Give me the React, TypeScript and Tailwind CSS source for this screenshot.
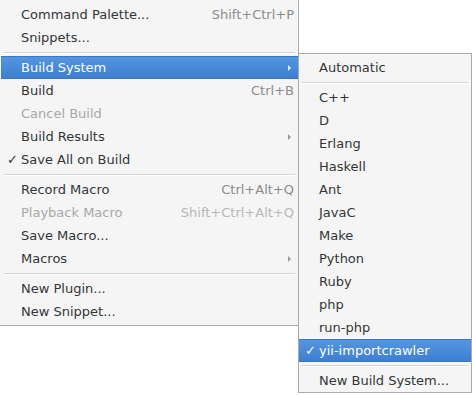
import React from 'react'

type Item =
  | { sep: true }
  | {
      sep?: false
      label: string
      shortcut?: string
      disabled?: boolean
      checked?: boolean
      active?: boolean
      submenu?: boolean
    }

const mainItems: Item[] = [
  { label: 'Command Palette...', shortcut: 'Shift+Ctrl+P' },
  { label: 'Snippets...' },
  { sep: true },
  { label: 'Build System', submenu: true, active: true },
  { label: 'Build', shortcut: 'Ctrl+B' },
  { label: 'Cancel Build', disabled: true },
  { label: 'Build Results', submenu: true },
  { label: 'Save All on Build', checked: true },
  { sep: true },
  { label: 'Record Macro', shortcut: 'Ctrl+Alt+Q' },
  { label: 'Playback Macro', shortcut: 'Shift+Ctrl+Alt+Q', disabled: true },
  { label: 'Save Macro...' },
  { label: 'Macros', submenu: true },
  { sep: true },
  { label: 'New Plugin...' },
  { label: 'New Snippet...' },
]

const buildItems: Item[] = [
  { label: 'Automatic' },
  { sep: true },
  { label: 'C++' },
  { label: 'D' },
  { label: 'Erlang' },
  { label: 'Haskell' },
  { label: 'Ant' },
  { label: 'JavaC' },
  { label: 'Make' },
  { label: 'Python' },
  { label: 'Ruby' },
  { label: 'php' },
  { label: 'run-php' },
  { label: 'yii-importcrawler', checked: true, active: true },
  { sep: true },
  { label: 'New Build System...' },
]

function Arrow({ light }: { light?: boolean }) {
  return (
    <svg width="3" height="6" viewBox="0 0 3 6" className="mr-[3px]">
      <path d="M0 0 L3 3 L0 6 Z" fill={light ? '#e8f0fb' : '#9a9a9a'} />
    </svg>
  )
}

function MenuRows({ items }: { items: Item[] }) {
  return (
    <>
      {items.map((it, i) => {
        if (it.sep) {
          return (
            <div key={i} className="h-[7px] flex flex-col justify-center px-[3px]">
              <div className="h-px bg-[#d4d4d4]" />
              <div className="h-px bg-white" />
            </div>
          )
        }
        const textColor = it.active
          ? 'text-white'
          : it.disabled
            ? 'text-[#a8a8a8]'
            : 'text-[#333638]'
        const scColor = it.active
          ? 'text-white'
          : it.disabled
            ? 'text-[#b8b8b8]'
            : 'text-[#8c8c8c]'
        return (
          <div
            key={i}
            className={`h-[23px] flex items-center pr-[4px] ${
              it.active
                ? 'bg-gradient-to-b from-[#5595e0] to-[#3c7fd3] border-y border-[#3a78c6]'
                : ''
            }`}
          >
            <span className={`w-[20px] pl-[6px] text-[13px] ${textColor}`}>
              {it.checked ? '✓' : ''}
            </span>
            <span className={`flex-1 ${textColor}`}>{it.label}</span>
            {it.shortcut && <span className={scColor}>{it.shortcut}</span>}
            {it.submenu && <Arrow light={it.active} />}
          </div>
        )
      })}
    </>
  )
}

export default function App() {
  return (
    <div
      className="relative w-[472px] h-[395px] bg-white overflow-hidden text-[13px] leading-none"
      style={{ fontFamily: '"DejaVu Sans", "Liberation Sans", sans-serif' }}
    >
      {/* main menu */}
      <div className="w-[299px] bg-[#f5f5f5] border-r border-b border-[#aaaaaa] pt-[3px] pb-[2px] pl-px">
        <MenuRows items={mainItems} />
      </div>

      {/* build system submenu */}
      <div className="absolute left-[298px] top-[53px] w-[174px] bg-[#f5f5f5] border border-[#aaaaaa] pt-[2px] pb-0">
        <MenuRows items={buildItems} />
      </div>
    </div>
  )
}
